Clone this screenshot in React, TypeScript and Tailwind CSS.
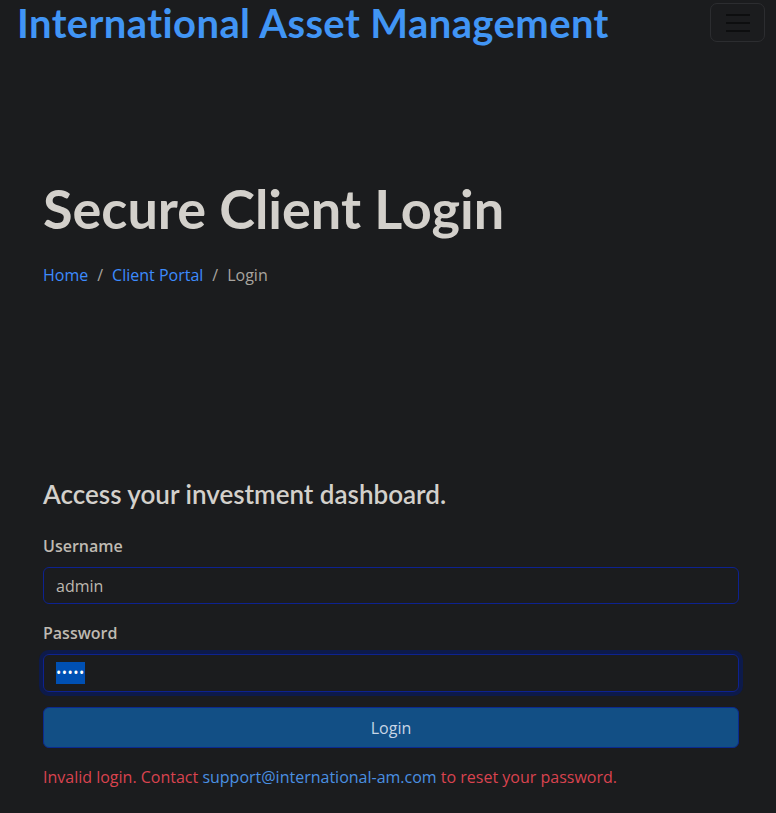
export default function App() {
  return (
    <div className="min-h-[813px] bg-[#1b1c1e] font-['Open_Sans',sans-serif] text-[#c2bdb5]">
      <nav className="flex h-[46px] items-start justify-between pl-[17px] pr-[11px]">
        <a className="font-['Lato',sans-serif] text-[40px] font-bold leading-[46px] tracking-[0.4px] text-[#4195f5]">
          International Asset Management
        </a>
        <button className="mt-[3px] flex h-[39px] w-[55px] flex-col items-center justify-center gap-[6px] rounded-[7px] border border-[#2c2d30]">
          <span className="block h-[2px] w-[24px] bg-[#0d0e0f]" />
          <span className="block h-[2px] w-[24px] bg-[#0d0e0f]" />
          <span className="block h-[2px] w-[24px] bg-[#0d0e0f]" />
        </button>
      </nav>

      <section className="px-[43px] pt-[131px]">
        <h1 className="font-['Lato',sans-serif] text-[54px] font-bold leading-[64px] text-[#d3d0cb]">
          Secure Client Login
        </h1>
        <ol className="mt-[22px] flex items-center text-[16px] leading-[24px]">
          <li className="text-[#3d8bfd]">Home</li>
          <li className="px-[9px] text-[#a8a49e]">/</li>
          <li className="text-[#3d8bfd]">Client Portal</li>
          <li className="px-[9px] text-[#a8a49e]">/</li>
          <li className="text-[#a8a49e]">Login</li>
        </ol>
      </section>

      <section className="px-[37px] pl-[43px] pt-[191px]">
        <h2 className="font-['Lato',sans-serif] text-[26px] font-semibold leading-[32px] text-[#d3d0cb]">
          Access your investment dashboard.
        </h2>
        <label className="mt-[24px] block text-[16px] font-semibold leading-[24px] text-[#bfbab2]">
          Username
        </label>
        <input
          readOnly
          value="admin"
          className="mt-[9px] block h-[37px] w-full rounded-[6px] border border-[#0d2290] bg-[#1b1c1e] px-[12px] text-[16px] text-[#bdb8b0] outline-none"
        />
        <label className="mt-[17px] block text-[16px] font-semibold leading-[24px] text-[#bfbab2]">
          Password
        </label>
        <div className="mt-[9px] rounded-[6px] border border-[#0d2290] ring-4 ring-[#0d1a4a]">
          <div className="flex h-[36px] items-center px-[12px]">
            <span className="bg-[#0050b3] text-[14px] leading-[22px] tracking-[0.5px] text-white">
              •••••
            </span>
          </div>
        </div>
        <button className="mt-[15px] block h-[41px] w-full rounded-[6px] border border-[#0b2a8f] bg-[#124f85] text-[16px] text-[#c8d6e6]">
          Login
        </button>
        <p className="mt-[17px] text-[16px] leading-[24px] text-[#d9434f]">
          Invalid login. Contact{" "}
          <a className="text-[#4a90e2]">support@international-am.com</a> to reset your password.
        </p>
      </section>
    </div>
  );
}
